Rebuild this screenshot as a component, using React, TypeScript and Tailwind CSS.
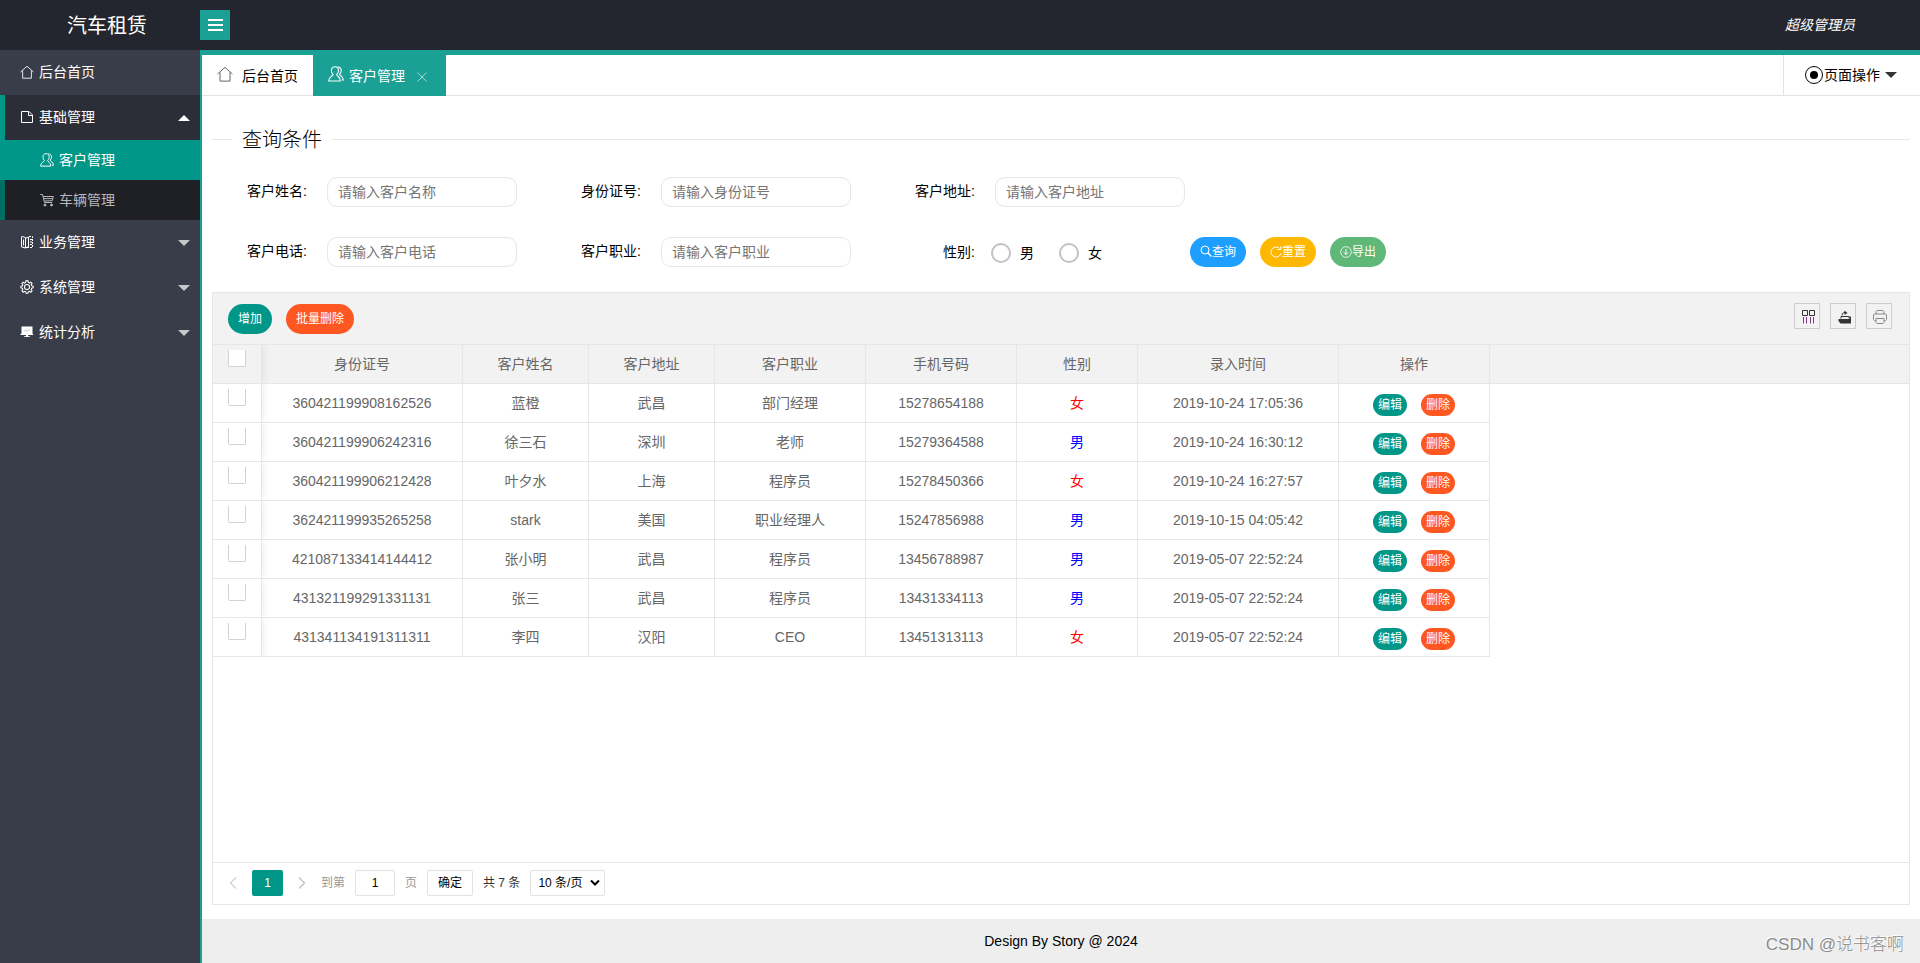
import clsx from 'clsx';
import type { ReactNode } from 'react';

type IconProps = { className?: string };

const HomeIcon = ({ className }: IconProps) => (
  <svg viewBox="0 0 16 16" fill="none" stroke="currentColor" className={className}>
    <path d="M.6 8 8 1.400 15.400 8M3 6.500v8.600h10V6.500" />
  </svg>
);

const UsersIcon = ({ className }: IconProps) => (
  <svg viewBox="0 0 16 16" fill="none" stroke="currentColor" strokeWidth="1.100" className={className}>
    <path d="M7 .7C4.800.7 3.400 2.400 3.400 4.700c0 1.700.7 3 1.800 3.800C5 10 .7 10.600.7 15h11.600c0-4.400-3.500-5-3.700-6.500 1.200-.8 1.900-2.100 1.900-3.800C10.500 2.400 9.200.7 7 .7Z" />
    <path d="M9.500 1c2.300-.2 3.700 1.300 3.700 3.500 0 1.600-.6 2.900-1.700 3.700.2 1.600 3.800 1.900 3.900 5.800h-1.900" />
  </svg>
);

const FileIcon = ({ className }: IconProps) => (
  <svg viewBox="0 0 14 14" fill="none" stroke="currentColor" className={className}>
    <path d="M1.500 1.500h7.500l3.500 3.500v7.500h-11zM8.500 1.500v4h4" />
  </svg>
);

const CartIcon = ({ className }: IconProps) => (
  <svg viewBox="0 0 14 14" fill="none" stroke="currentColor" className={className}>
    <path d="M.3 1.500h2.200l2 8h7.700M3 3.500h10.300l-1 4.200-8 .3M4 5.600h8.500" />
    <circle cx="5" cy="12" r="1" fill="currentColor" />
    <circle cx="11.500" cy="12" r="1" fill="currentColor" />
  </svg>
);

const BookIcon = ({ className }: IconProps) => (
  <svg viewBox="0 0 14 14" fill="none" stroke="currentColor" className={className}>
    <path d="M1.500 1.500v10.500l4 1V2.500l-3.500-1M5.500 3.500 8.500 2v9.500L5.500 13M3.500 4.500v6" />
    <path d="M9 1.500h3.500v11H7" strokeDasharray="2 1" />
    <path d="M10 4.500h2M10 7h2M10 9.500h2" />
  </svg>
);

const GearIcon = ({ className }: IconProps) => (
  <svg viewBox="0 0 16 16" fill="none" stroke="currentColor" strokeWidth="1.200" className={className}>
    <path d="m6.700 1-.3 1.800-1.300.7L3.600 2.400 2.200 4l1 1.400-.6 1.400L1 7v2l1.600.3.6 1.500-1 1.400L3.700 14l1.500-1.100 1.400.6L7 15.200h2l.4-1.700 1.400-.6 1.500 1.100 1.500-1.600-1-1.500.6-1.500L15 9V7l-1.600-.3-.6-1.400 1-1.400-1.500-1.500-1.500 1.100-1.300-.7L9.200 1Z" />
    <circle cx="8" cy="8" r="2.900" />
  </svg>
);

const BoardIcon = ({ className }: IconProps) => (
  <svg viewBox="0 0 14 14" fill="currentColor" className={className}>
    <path d="M1.500 1.500h11v7.500h.7v1H8v1.200h2v.8H4v-.8h2V10H.5V9l1-.5z" />
    <path d="m4 6.500 2-1.500 1.500 1L10 4" fill="none" stroke="#9fa1a8" strokeWidth=".6" />
  </svg>
);

const SearchIcon = ({ className }: IconProps) => (
  <svg viewBox="0 0 12 12" fill="none" stroke="currentColor" className={className}>
    <circle cx="5" cy="5" r="4" />
    <path d="m7.800 7.800 3.700 3.700" strokeWidth="1.400" />
  </svg>
);

const RefreshIcon = ({ className }: IconProps) => (
  <svg viewBox="0 0 12 12" fill="none" stroke="currentColor" className={className}>
    <path d="M10.900 7.200A5 5 0 1 1 9.300 2.300M10.700.3v3.200H7.500" />
  </svg>
);

const DownloadIcon = ({ className }: IconProps) => (
  <svg viewBox="0 0 12 12" fill="none" stroke="currentColor" className={className}>
    <circle cx="6" cy="6" r="5.300" strokeWidth=".8" />
    <path d="M6 3v5.500M3.800 6.400 6 8.600l2.200-2.200" />
  </svg>
);

const ColumnsIcon = () => (
  <svg viewBox="0 0 14 14" fill="none" stroke="currentColor" className="ml-[3px] size-3.5">
    <path d="M.5.5h5v5h-5zM7.500.5h5v5h-5z" />
    <path d="M1.500 7v6.500M4.500 7v6.500M8.500 7v6.500M11.500 7v6.500" stroke="#7a3a86" />
  </svg>
);

const ExportIcon = () => (
  <svg viewBox="0 0 14 14" fill="currentColor" className="ml-[3px] size-3.5">
    <path d="M.5 9h11V6.500h1.500v7H2.500L.5 11z" />
    <path d="M3 8.500V6.500h8v2M4 5.500c0-2 1-3 3-3" fill="none" stroke="currentColor" />
    <path d="M6.500.5 9.500 3 6.500 5z" />
  </svg>
);

const PrintIcon = () => (
  <svg viewBox="0 0 14 14" fill="none" stroke="#888" className="ml-px size-3.5">
    <path d="M3 4V1.500L4 .5h6l1 1v2.500M3 10.500H1.500l-1-1V5l1-1h11l1 1v4.500l-1 1H11" />
    <path d="M3 8.500h8v4l-1 1H4l-1-1z" />
  </svg>
);

const Triangle = ({ up, className }: { up?: boolean; className?: string }) => (
  <span
    className={clsx(
      'border-x-[6px] border-x-transparent',
      up ? 'border-b-[6px] border-b-white' : 'border-t-[6px]',
      className,
    )}
  />
);

type MenuItemProps = {
  icon: ReactNode;
  label: string;
  expandable?: boolean;
  open?: boolean;
};

const MenuItem = ({ icon, label, expandable, open }: MenuItemProps) => (
  <li
    className={clsx(
      'flex h-[45px] items-center pr-[10px] text-white',
      open ? 'border-l-[5px] border-[#009688] bg-[#2b2d37] pl-[15px]' : 'pl-5',
    )}
  >
    <span className="mb-0.5">{icon}</span>
    <span className="mb-0.5 ml-[5px] flex-1">{label}</span>
    {expandable && <Triangle up={open} className="border-t-[#c6c7ca]" />}
  </li>
);

const Sidebar = () => (
  <ul className="w-[200px] shrink-0 bg-[#393d49]">
    <MenuItem icon={<HomeIcon className="size-3.5" />} label="后台首页" />
    <MenuItem icon={<FileIcon className="size-3.5" />} label="基础管理" expandable open />
    <li className="flex h-10 items-center bg-[#009688] pl-10 text-white">
      <UsersIcon className="size-3.5" />
      <span className="ml-[5px]">客户管理</span>
    </li>
    <li className="flex h-10 items-center border-l-[5px] border-[#006e65] bg-[#1f2025] pl-[35px] text-[#b7b7b9]">
      <CartIcon className="size-3.5" />
      <span className="ml-[5px]">车辆管理</span>
    </li>
    <MenuItem icon={<BookIcon className="size-3.5" />} label="业务管理" expandable />
    <MenuItem icon={<GearIcon className="size-3.5" />} label="系统管理" expandable />
    <MenuItem icon={<BoardIcon className="size-3.5" />} label="统计分析" expandable />
  </ul>
);

const Header = () => (
  <header className="flex h-[50px] shrink-0 items-center bg-[#23262e] text-white">
    <h1 className="w-[200px] pt-0.5 pl-[67px] text-xl">汽车租赁</h1>
    <button type="button" className="flex size-[30px] flex-col items-center justify-center gap-[3px] bg-[#1aa094]">
      <span className="h-0.5 w-[15px] bg-white" />
      <span className="h-0.5 w-[15px] bg-white" />
      <span className="h-0.5 w-[15px] bg-white" />
    </button>
    <span className="mr-[65px] ml-auto italic">超级管理员</span>
  </header>
);

const Tabs = () => (
  <div className="flex h-[41px] shrink-0 border-b border-[#e2e2e2]">
    <div className="flex w-[111px] items-center pl-[15px]">
      <HomeIcon className="mb-[3px] size-4 text-[#666]" />
      <span className="ml-[9px] pt-px">后台首页</span>
    </div>
    <div className="-mb-px flex w-[133px] items-center bg-[#1aa094] pl-[15px] text-white">
      <UsersIcon className="mb-[3px] size-4" />
      <span className="ml-[5px]">客户管理</span>
      <svg viewBox="0 0 10 10" stroke="#a9d8d3" className="mt-0.5 ml-[12px] size-[10px]">
        <path d="m.5.5 9 9M9.500.5l-9 9" />
      </svg>
    </div>
    <div className="ml-auto flex w-[137px] items-center border-l border-[#e2e2e2] pl-[21px]">
      <span className="flex size-[18px] items-center justify-center rounded-full border border-black">
        <span className="size-2 rounded-full bg-black" />
      </span>
      <span className="ml-px">页面操作</span>
      <Triangle className="ml-[5px] border-t-[#333]" />
    </div>
  </div>
);

const Field = ({ label, placeholder }: { label: string; placeholder: string }) => (
  <label className="flex w-[334px] items-center">
    <span className="w-[95px] pb-0.5 text-right">{label}:</span>
    <input
      placeholder={placeholder}
      className="ml-5 h-[30px] w-[190px] rounded-[10px] border border-[#e6e6e6] pl-[10px] placeholder:text-[#757575]"
    />
  </label>
);

const Radio = ({ label }: { label: string }) => (
  <label className="flex w-[68px] items-center pt-0.5">
    <span className="size-5 rounded-full border-2 border-[#c2c2c2]" />
    <span className="ml-[9px]">{label}</span>
  </label>
);

const PillButton = ({ className, children }: { className: string; children: ReactNode }) => (
  <button
    type="button"
    className={clsx('flex h-[30px] items-center rounded-[15px] px-[10px] text-xs text-white', className)}
  >
    {children}
  </button>
);

const SearchForm = () => (
  <form className="px-[10px]">
    <div className="mt-[28px] flex h-[30px] items-center text-xl font-light">
      <span className="h-px w-5 bg-[#e6e6e6]" />
      <span className="px-[10px] pt-0.5">查询条件</span>
      <span className="h-px flex-1 bg-[#e6e6e6]" />
    </div>
    <div className="mt-[23px] flex h-[30px]">
      <Field label="客户姓名" placeholder="请输入客户名称" />
      <Field label="身份证号" placeholder="请输入身份证号" />
      <Field label="客户地址" placeholder="请输入客户地址" />
    </div>
    <div className="mt-[30px] flex h-[30px]">
      <Field label="客户电话" placeholder="请输入客户电话" />
      <Field label="客户职业" placeholder="请输入客户职业" />
      <div className="flex w-[310px] items-center">
        <span className="mr-4 w-[95px] text-right">性别:</span>
        <Radio label="男" />
        <Radio label="女" />
      </div>
      <div className="flex gap-[14px]">
        <PillButton className="bg-[#1e9fff]">
          <SearchIcon className="mb-0.5 size-3" />
          查询
        </PillButton>
        <PillButton className="bg-[#ffb800]">
          <RefreshIcon className="size-3" />
          重置
        </PillButton>
        <PillButton className="bg-[#5fb878]">
          <DownloadIcon className="size-3" />
          导出
        </PillButton>
      </div>
    </div>
  </form>
);

const columns = [
  { title: '身份证号', width: 'w-[201px]' },
  { title: '客户姓名', width: 'w-[126px]' },
  { title: '客户地址', width: 'w-[126px]' },
  { title: '客户职业', width: 'w-[151px]' },
  { title: '手机号码', width: 'w-[151px]' },
  { title: '性别', width: 'w-[121px]' },
  { title: '录入时间', width: 'w-[201px]' },
  { title: '操作', width: 'w-[151px]' },
];

const customers = [
  ['360421199908162526', '蓝橙', '武昌', '部门经理', '15278654188', '女', '2019-10-24 17:05:36'],
  ['360421199906242316', '徐三石', '深圳', '老师', '15279364588', '男', '2019-10-24 16:30:12'],
  ['360421199906212428', '叶夕水', '上海', '程序员', '15278450366', '女', '2019-10-24 16:27:57'],
  ['362421199935265258', 'stark', '美国', '职业经理人', '15247856988', '男', '2019-10-15 04:05:42'],
  ['421087133414144412', '张小明', '武昌', '程序员', '13456788987', '男', '2019-05-07 22:52:24'],
  ['431321199291331131', '张三', '武昌', '程序员', '13431334113', '男', '2019-05-07 22:52:24'],
  ['431341134191311311', '李四', '汉阳', 'CEO', '13451313113', '女', '2019-05-07 22:52:24'],
];

const Cell = ({ className, children }: { className: string; children: ReactNode }) => (
  <div className={clsx('flex shrink-0 items-center justify-center border-r border-[#e6e6e6]', className)}>
    {children}
  </div>
);

const CheckCell = () => (
  <div className="z-10 w-[49px] shrink-0 border-r border-[#e6e6e6] pt-[5px] pl-[15px] shadow-[1px_0_8px_rgba(0,0,0,0.08)] [clip-path:inset(0_-10px_0_0)]">
    <div className="h-[17px] w-[18px] rounded-b-[2px] border border-t-0 border-[#d2d2d2] bg-white" />
  </div>
);

const ToolButton = ({ children }: { children: ReactNode }) => (
  <button type="button" className="flex size-[26px] items-center justify-center border border-[#ccc] pt-px text-[#333]">
    {children}
  </button>
);

const RowButton = ({ className, children }: { className: string; children: ReactNode }) => (
  <button type="button" className={clsx('h-[22px] rounded-[11px] px-[5px] text-xs leading-[22px] text-white', className)}>
    {children}
  </button>
);

const Pagination = () => (
  <div className="flex h-[42px] shrink-0 items-center border-t border-[#e6e6e6] pb-0.5 pl-4 text-xs text-[#333]">
    <svg viewBox="0 0 8 12" fill="none" stroke="#d2d2d2" strokeWidth="1.300" className="h-3 w-2">
      <path d="M7 .5 1.500 6 7 11.500" />
    </svg>
    <span className="ml-[15px] flex h-[26px] w-[31px] items-center justify-center rounded-[2px] bg-[#009688] text-white">
      1
    </span>
    <svg viewBox="0 0 8 12" fill="none" stroke="#c2c2c2" strokeWidth="1.300" className="ml-[15px] h-3 w-2">
      <path d="M1 .5 6.500 6 1 11.500" />
    </svg>
    <span className="ml-[15px] text-[#999]">到第</span>
    <input
      defaultValue="1"
      className="ml-[10px] h-[26px] w-10 rounded-[2px] border border-[#e2e2e2] text-center text-black"
    />
    <span className="ml-[10px] text-[#999]">页</span>
    <button type="button" className="ml-[10px] h-[26px] w-[46px] rounded-[2px] border border-[#e2e2e2] pt-px text-black">
      确定
    </button>
    <span className="ml-[10px]">共 7 条</span>
    <button
      type="button"
      className="ml-[10px] flex h-[26px] w-[75px] items-center justify-between rounded-[2px] border border-[#e2e2e2] pr-1 pl-[7px] text-black"
    >
      10 条/页
      <svg viewBox="0 0 10 7" fill="none" stroke="currentColor" strokeWidth="2" className="h-[7px] w-[10px]">
        <path d="m1 1.500 4 4 4-4" />
      </svg>
    </button>
  </div>
);

const CustomerTable = () => (
  <section className="mx-[10px] mt-[25px] flex h-[613px] shrink-0 flex-col border border-[#e6e6e6] text-[#666]">
    <div className="flex h-[52px] shrink-0 border-b border-[#e6e6e6] bg-[#f2f2f2] pt-[11px] pr-[17px] pl-[15px]">
      <PillButton className="bg-[#009688]">增加</PillButton>
      <PillButton className="ml-[14px] bg-[#ff5722]">批量删除</PillButton>
      <div className="-mt-px ml-auto flex gap-[10px]">
        <ToolButton>
          <ColumnsIcon />
        </ToolButton>
        <ToolButton>
          <ExportIcon />
        </ToolButton>
        <ToolButton>
          <PrintIcon />
        </ToolButton>
      </div>
    </div>
    <div className="flex h-[39px] shrink-0 border-b border-[#e6e6e6] bg-[#f2f2f2]">
      <CheckCell />
      {columns.map((column) => (
        <Cell key={column.title} className={column.width}>
          {column.title}
        </Cell>
      ))}
    </div>
    <div className="flex-1">
      {customers.map((customer) => (
        <div key={customer[0]} className="flex h-[39px] w-[1277px] border-b border-[#e6e6e6]">
          <CheckCell />
          {customer.map((value, index) => (
            <Cell
              key={columns[index].title}
              className={clsx(
                columns[index].width,
                value === '女' && 'text-[#f00]',
                value === '男' && 'text-[#00f]',
              )}
            >
              {value}
            </Cell>
          ))}
          <Cell className="w-[151px] gap-[14px] pt-[3px]">
            <RowButton className="bg-[#009688]">编辑</RowButton>
            <RowButton className="bg-[#ff5722]">删除</RowButton>
          </Cell>
        </div>
      ))}
    </div>
    <Pagination />
  </section>
);

export default function App() {
  return (
    <div className="relative flex h-[963px] w-[1920px] flex-col overflow-hidden bg-white font-['Liberation_Sans','Noto_Sans_CJK_SC',sans-serif] text-sm text-black">
      <Header />
      <div className="flex flex-1">
        <Sidebar />
        <main className="flex flex-1 flex-col border-t-[5px] border-l-2 border-[#1aa094]">
          <Tabs />
          <SearchForm />
          <CustomerTable />
          <footer className="mt-auto flex h-11 items-center justify-center bg-[#eee]">Design By Story @ 2024</footer>
        </main>
      </div>
      <span className="absolute right-4 bottom-1.5 text-[17px] leading-6 font-light text-[#8c8c8c] [text-shadow:-1px_-1px_0_#fff]">
        CSDN @说书客啊
      </span>
    </div>
  );
}
